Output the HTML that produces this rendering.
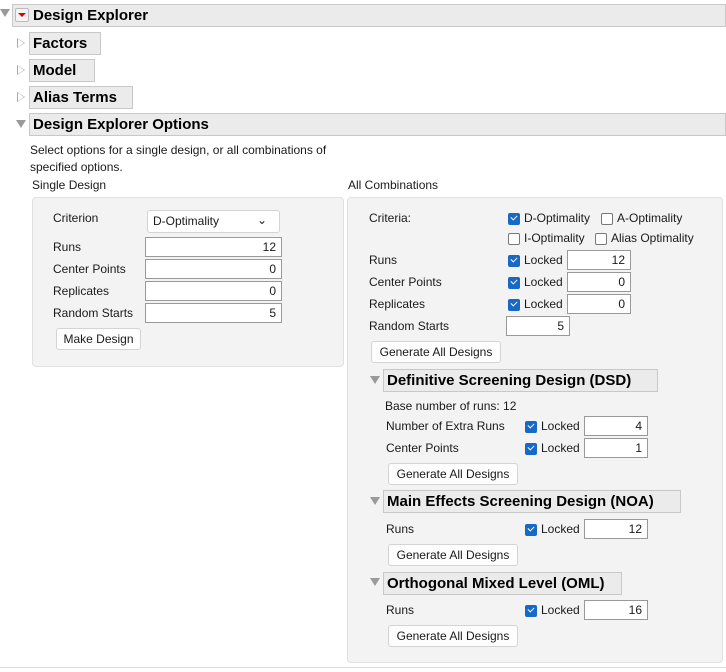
<!DOCTYPE html>
<html><head><style>
body{margin:0;width:726px;height:672px;background:#fff;font-family:"Liberation Sans",sans-serif;font-size:12px;color:#1a1a1a;position:relative;overflow:hidden}
.a{position:absolute;white-space:nowrap}
.hd{position:absolute;background:#ebebeb;border:1px solid #c8c8c8;font-weight:bold;font-size:15px;line-height:21px;padding-left:3px;box-sizing:border-box;height:23px;color:#000}
.tri{position:absolute;width:0;height:0;border-left:5px solid transparent;border-right:5px solid transparent;border-top:8px solid #9a9a9a}
.tr{position:absolute;width:0;height:0;border-top:5px solid transparent;border-bottom:5px solid transparent;border-left:8px solid #fff}
.inp{position:absolute;background:#fff;border:1px solid #999;box-sizing:border-box;height:20px;text-align:right;padding-right:5px;line-height:18px}
.btn{position:absolute;background:#fdfdfd;border:1px solid #d4d4d4;border-radius:3px;box-sizing:border-box;height:22px;line-height:20px;text-align:center}
.cb{position:absolute;width:12px;height:12px;border-radius:2px;box-sizing:border-box}
.on{background:#1868c6}
.on::after{content:"";position:absolute;left:3px;top:2px;width:5px;height:3px;border-left:1.5px solid #fff;border-bottom:1.5px solid #fff;transform:rotate(-45deg)}
.off{border:1px solid #777;background:#fff}
.pan{position:absolute;background:#f3f3f3;border:1px solid #e0e0e0;border-radius:4px;box-sizing:border-box}
</style></head><body>
<div class="tri" style="left:0;top:9px"></div>
<div class="hd" style="left:12px;top:4px;width:714px;padding-left:20px">Design Explorer</div>
<div class="a" style="left:15px;top:8px;width:12px;height:12px;background:#f4f4f4;border:1px solid #bbb;border-radius:2px"></div>
<div class="a" style="left:18px;top:13px;width:0;height:0;border-left:4px solid transparent;border-right:4px solid transparent;border-top:4px solid #d00"></div>
<div class="tr" style="left:17px;top:38px;border-left-color:#aaa"></div><div class="tr" style="left:18px;top:39px;border-top-width:4px;border-bottom-width:4px;border-left-width:6px"></div>
<div class="hd" style="left:29px;top:32px;width:72px">Factors</div>
<div class="tr" style="left:17px;top:65px;border-left-color:#aaa"></div><div class="tr" style="left:18px;top:66px;border-top-width:4px;border-bottom-width:4px;border-left-width:6px"></div>
<div class="hd" style="left:29px;top:59px;width:66px">Model</div>
<div class="tr" style="left:17px;top:92px;border-left-color:#aaa"></div><div class="tr" style="left:18px;top:93px;border-top-width:4px;border-bottom-width:4px;border-left-width:6px"></div>
<div class="hd" style="left:29px;top:86px;width:104px">Alias Terms</div>
<div class="tri" style="left:16px;top:120px"></div>
<div class="hd" style="left:29px;top:113px;width:697px">Design Explorer Options</div>
<div class="a" style="left:30px;top:143px">Select options for a single design, or all combinations of</div>
<div class="a" style="left:30px;top:160px">specified options.</div>
<div class="a" style="left:32px;top:178px">Single Design</div>
<div class="pan" style="left:32px;top:197px;width:312px;height:170px"></div>
<div class="a" style="left:53px;top:211px">Criterion</div>
<div class="btn" style="left:147px;top:210px;width:133px;height:23px;text-align:left;padding-left:5px;background:#fff">D-Optimality<span style="position:absolute;right:12px;top:-1px">&#8964;</span></div>
<div class="a" style="left:53px;top:240px">Runs</div><div class="inp" style="left:145px;top:237px;width:137px">12</div>
<div class="a" style="left:53px;top:262px">Center Points</div><div class="inp" style="left:145px;top:259px;width:137px">0</div>
<div class="a" style="left:53px;top:284px">Replicates</div><div class="inp" style="left:145px;top:281px;width:137px">0</div>
<div class="a" style="left:53px;top:306px">Random Starts</div><div class="inp" style="left:145px;top:303px;width:137px">5</div>
<div class="btn" style="left:56px;top:328px;width:85px">Make Design</div>
<div class="a" style="left:348px;top:178px">All Combinations</div>
<div class="pan" style="left:347px;top:197px;width:376px;height:466px"></div>
<div class="a" style="left:369px;top:211px">Criteria:</div>
<div class="cb on" style="left:508px;top:213px"></div><div class="a" style="left:524px;top:211px">D-Optimality</div>
<div class="cb off" style="left:601px;top:213px"></div><div class="a" style="left:617px;top:211px">A-Optimality</div>
<div class="cb off" style="left:508px;top:233px"></div><div class="a" style="left:524px;top:231px">I-Optimality</div>
<div class="cb off" style="left:595px;top:233px"></div><div class="a" style="left:611px;top:231px">Alias Optimality</div>
<div class="a" style="left:369px;top:253px">Runs</div><div class="cb on" style="left:508px;top:255px"></div><div class="a" style="left:524px;top:253px">Locked</div><div class="inp" style="left:567px;top:250px;width:64px">12</div>
<div class="a" style="left:369px;top:275px">Center Points</div><div class="cb on" style="left:508px;top:277px"></div><div class="a" style="left:524px;top:275px">Locked</div><div class="inp" style="left:567px;top:272px;width:64px">0</div>
<div class="a" style="left:369px;top:297px">Replicates</div><div class="cb on" style="left:508px;top:299px"></div><div class="a" style="left:524px;top:297px">Locked</div><div class="inp" style="left:567px;top:294px;width:64px">0</div>
<div class="a" style="left:369px;top:319px">Random Starts</div><div class="inp" style="left:506px;top:316px;width:64px">5</div>
<div class="btn" style="left:371px;top:341px;width:130px">Generate All Designs</div>
<div class="tri" style="left:370px;top:376px"></div>
<div class="hd" style="left:383px;top:369px;width:275px">Definitive Screening Design (DSD)</div>
<div class="a" style="left:385px;top:399px">Base number of runs: 12</div>
<div class="a" style="left:386px;top:419px">Number of Extra Runs</div><div class="cb on" style="left:525px;top:421px"></div><div class="a" style="left:541px;top:419px">Locked</div><div class="inp" style="left:584px;top:416px;width:64px">4</div>
<div class="a" style="left:386px;top:441px">Center Points</div><div class="cb on" style="left:525px;top:443px"></div><div class="a" style="left:541px;top:441px">Locked</div><div class="inp" style="left:584px;top:438px;width:64px">1</div>
<div class="btn" style="left:388px;top:463px;width:130px">Generate All Designs</div>
<div class="tri" style="left:370px;top:497px"></div>
<div class="hd" style="left:383px;top:490px;width:298px">Main Effects Screening Design (NOA)</div>
<div class="a" style="left:386px;top:522px">Runs</div><div class="cb on" style="left:525px;top:524px"></div><div class="a" style="left:541px;top:522px">Locked</div><div class="inp" style="left:584px;top:519px;width:64px">12</div>
<div class="btn" style="left:388px;top:544px;width:130px">Generate All Designs</div>
<div class="tri" style="left:370px;top:578px"></div>
<div class="hd" style="left:383px;top:572px;width:239px">Orthogonal Mixed Level (OML)</div>
<div class="a" style="left:386px;top:603px">Runs</div><div class="cb on" style="left:525px;top:605px"></div><div class="a" style="left:541px;top:603px">Locked</div><div class="inp" style="left:584px;top:600px;width:64px">16</div>
<div class="btn" style="left:388px;top:625px;width:130px">Generate All Designs</div>
<div class="a" style="left:0;top:667px;width:726px;height:1px;background:#ddd"></div>
</body></html>
